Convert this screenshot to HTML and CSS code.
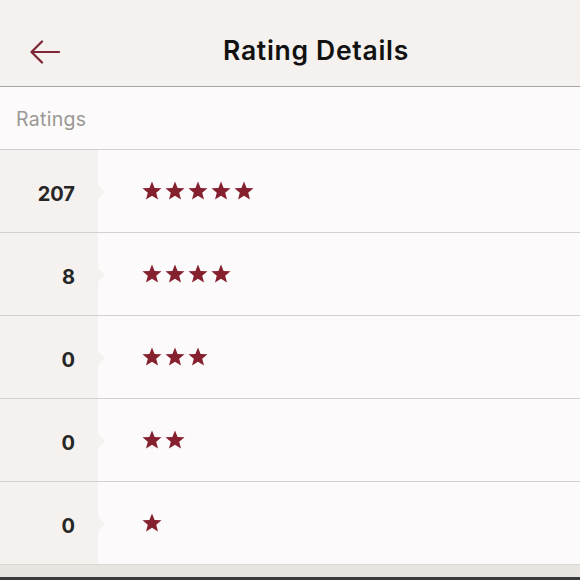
FILE: index.html
```html
<!DOCTYPE html>
<html>
<head>
<meta charset="utf-8">
<link rel="stylesheet" href="styles.css">
</head>
<body>
<div class="screen">
  <header class="header">
    <div class="back">
      <svg width="30" height="24" viewBox="0 0 30 24"><path d="M29 12H2M12 1.5L1.5 12 12 22.5" fill="none" stroke="#7c2535" stroke-width="2.2" stroke-linecap="round" stroke-linejoin="round"/></svg>
    </div>
    <h1 class="title">Rating Details</h1>
  </header>
  <div class="section">Ratings</div>
  <div class="rows">
    <div class="row"><div class="count">207</div><div class="stars"><svg class="star" viewBox="0 0 20 20"><path d="M10 .6l2.6 6.3 6.9.4-5.3 4.5 1.8 6.7L10 14.8l-6 3.7 1.8-6.7L.5 7.3l6.9-.4z"/></svg><svg class="star" viewBox="0 0 20 20"><path d="M10 .6l2.6 6.3 6.9.4-5.3 4.5 1.8 6.7L10 14.8l-6 3.7 1.8-6.7L.5 7.3l6.9-.4z"/></svg><svg class="star" viewBox="0 0 20 20"><path d="M10 .6l2.6 6.3 6.9.4-5.3 4.5 1.8 6.7L10 14.8l-6 3.7 1.8-6.7L.5 7.3l6.9-.4z"/></svg><svg class="star" viewBox="0 0 20 20"><path d="M10 .6l2.6 6.3 6.9.4-5.3 4.5 1.8 6.7L10 14.8l-6 3.7 1.8-6.7L.5 7.3l6.9-.4z"/></svg><svg class="star" viewBox="0 0 20 20"><path d="M10 .6l2.6 6.3 6.9.4-5.3 4.5 1.8 6.7L10 14.8l-6 3.7 1.8-6.7L.5 7.3l6.9-.4z"/></svg></div></div>
    <div class="row"><div class="count">8</div><div class="stars"><svg class="star" viewBox="0 0 20 20"><path d="M10 .6l2.6 6.3 6.9.4-5.3 4.5 1.8 6.7L10 14.8l-6 3.7 1.8-6.7L.5 7.3l6.9-.4z"/></svg><svg class="star" viewBox="0 0 20 20"><path d="M10 .6l2.6 6.3 6.9.4-5.3 4.5 1.8 6.7L10 14.8l-6 3.7 1.8-6.7L.5 7.3l6.9-.4z"/></svg><svg class="star" viewBox="0 0 20 20"><path d="M10 .6l2.6 6.3 6.9.4-5.3 4.5 1.8 6.7L10 14.8l-6 3.7 1.8-6.7L.5 7.3l6.9-.4z"/></svg><svg class="star" viewBox="0 0 20 20"><path d="M10 .6l2.6 6.3 6.9.4-5.3 4.5 1.8 6.7L10 14.8l-6 3.7 1.8-6.7L.5 7.3l6.9-.4z"/></svg></div></div>
    <div class="row"><div class="count">0</div><div class="stars"><svg class="star" viewBox="0 0 20 20"><path d="M10 .6l2.6 6.3 6.9.4-5.3 4.5 1.8 6.7L10 14.8l-6 3.7 1.8-6.7L.5 7.3l6.9-.4z"/></svg><svg class="star" viewBox="0 0 20 20"><path d="M10 .6l2.6 6.3 6.9.4-5.3 4.5 1.8 6.7L10 14.8l-6 3.7 1.8-6.7L.5 7.3l6.9-.4z"/></svg><svg class="star" viewBox="0 0 20 20"><path d="M10 .6l2.6 6.3 6.9.4-5.3 4.5 1.8 6.7L10 14.8l-6 3.7 1.8-6.7L.5 7.3l6.9-.4z"/></svg></div></div>
    <div class="row"><div class="count">0</div><div class="stars"><svg class="star" viewBox="0 0 20 20"><path d="M10 .6l2.6 6.3 6.9.4-5.3 4.5 1.8 6.7L10 14.8l-6 3.7 1.8-6.7L.5 7.3l6.9-.4z"/></svg><svg class="star" viewBox="0 0 20 20"><path d="M10 .6l2.6 6.3 6.9.4-5.3 4.5 1.8 6.7L10 14.8l-6 3.7 1.8-6.7L.5 7.3l6.9-.4z"/></svg></div></div>
    <div class="row last"><div class="count">0</div><div class="stars"><svg class="star" viewBox="0 0 20 20"><path d="M10 .6l2.6 6.3 6.9.4-5.3 4.5 1.8 6.7L10 14.8l-6 3.7 1.8-6.7L.5 7.3l6.9-.4z"/></svg></div></div>
  </div>
  <div class="footer"></div>
</div>
</body>
</html>
```
FILE: styles.css
```css
* { box-sizing: border-box; }
html, body { margin: 0; padding: 0; }
body {
  width: 580px;
  height: 580px;
  overflow: hidden;
  font-family: Inter, "Liberation Sans", sans-serif;
  background: #fcfafa;
}
.screen { display: flex; flex-direction: column; height: 580px; }
.header {
  height: 87px;
  flex: none;
  display: flex;
  align-items: center;
  background: #f4f1ee;
  border-bottom: 1px solid #a8a6a4;
  padding-top: 14px;
}
.back {
  width: 60px;
  padding-left: 30px;
  display: flex;
  align-items: center;
  margin-top: 4px;
}
.back svg { display: block; }
.title {
  flex: 1;
  margin: 0;
  padding-right: 8px;
  text-align: center;
  font-size: 26.5px;
  font-weight: 600;
  color: #111;
  letter-spacing: 0.7px;
}
.section {
  height: 63px;
  flex: none;
  display: flex;
  align-items: center;
  padding-left: 16px;
  padding-top: 1px;
  font-size: 19.5px;
  letter-spacing: 0.3px;
  color: #9a9896;
  background: #fcfafa;
  border-bottom: 1px solid #d3d1cf;
}
.rows { flex: none; }
.row {
  height: 83px;
  display: flex;
  border-bottom: 1px solid #d3d1cf;
  background: #fcfafa;
}
.row.last { border-bottom: none; height: 82px; }
.count {
  position: relative;
  width: 98px;
  flex: none;
  background: #f4f1ee;
  display: flex;
  align-items: center;
  justify-content: flex-end;
  padding-right: 23px;
  padding-top: 5px;
  font-size: 20px;
  font-weight: 700;
  color: #262626;
}
.count::after {
  content: "";
  position: absolute;
  right: -7px;
  top: 50%;
  margin-top: 1px;
  border-top: 7px solid transparent;
  border-bottom: 7px solid transparent;
  border-left: 7px solid #f4f1ee;
  transform: translateY(-50%);
}
.stars {
  display: flex;
  align-items: center;
  gap: 3px;
  padding-left: 44px;
  padding-bottom: 1px;
}
.star { width: 20px; height: 20px; fill: #85202f; display: block; }
.footer {
  flex: 1;
  background: #e8e5e1;
  border-bottom: 3px solid #3a3a3a;
  border-top: 1px solid #d8d5d2;
}
```
